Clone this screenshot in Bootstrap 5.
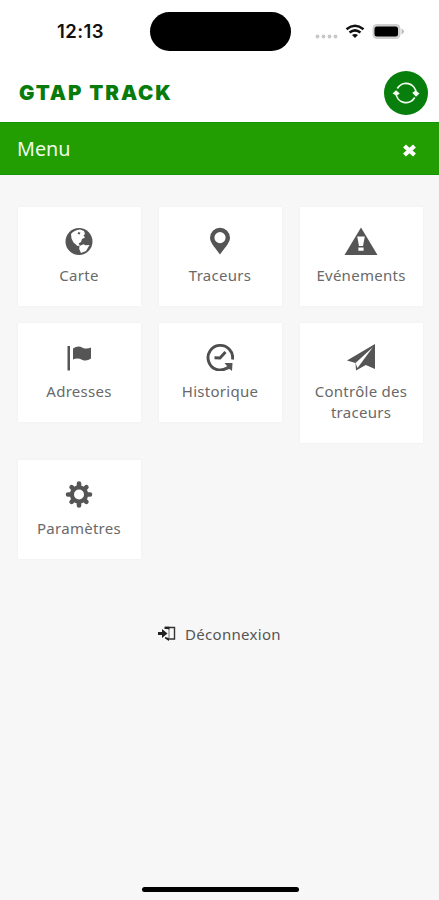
<!DOCTYPE html>
<html lang="fr">
<head>
<meta charset="utf-8">
<meta name="viewport" content="width=device-width, initial-scale=1">
<title>GTAP TRACK</title>
<link href="https://cdn.jsdelivr.net/npm/bootstrap@5.3.0/dist/css/bootstrap.min.css" rel="stylesheet">
<style>
body{background:#f7f7f7;font-family:"Noto Sans","Open Sans",sans-serif;height:900px;overflow:hidden}
svg{display:block;flex:none}
.status{height:63px;padding:0 0 0 57px}
.clock{font:600 18.5px/24px Inter,sans-serif;width:93px;letter-spacing:.45px;color:#111;margin-top:-1px}
.island{width:141px;height:39px;flex:none}
.signals{padding-left:24px}
.brand-row{height:59px;padding:0 11px 0 19px}
.brand{font:900 20.5px/24px Inter,sans-serif;color:#087b0b;letter-spacing:1.9px}
.refresh{width:44px;height:44px;background:#087e0c}
.menu-bar{height:53px;background:#229d02;border-top:1px solid #119507;border-bottom:1px solid #149607;padding:0 22px 0 17px;color:#f0faec;font-size:19.8px}
.menu-bar svg{margin-top:3px}
.tiles{display:grid;grid-template-columns:repeat(3,123px);column-gap:18px;row-gap:17px;padding:32px 0 0 18px;align-items:start}
.tile{min-height:99px;background:#fff;color:#696969;font-size:15px;line-height:21px;padding:20px 5px 20px 4px;box-shadow:0 0 2px #eee;letter-spacing:.27px}
.tile svg{margin-bottom:10px;fill:#555}
.logout{color:#555;font-size:15px;line-height:22px;margin-top:64px;letter-spacing:.3px}
.home{width:157px;height:5px;margin-bottom:8px;transform:translateX(1px)}
</style>
<script src="https://cdn.jsdelivr.net/npm/bootstrap@5.3.0/dist/js/bootstrap.bundle.min.js"></script>
</head>
<body class="d-flex flex-column">
<header class="bg-white">
 <div class="status d-flex align-items-center">
  <span class="clock flex-shrink-0">12:13</span><span class="island bg-black rounded-pill"></span>
  <div class="signals d-flex align-items-center">
   <svg width="90" height="24" viewBox="0 0 90 24"><g fill="#c8c8c8"><circle cx="2.500" cy="16.500" r="1.900"/><circle cx="8.500" cy="16.500" r="1.900"/><circle cx="14.500" cy="16.500" r="1.900"/><circle cx="20.500" cy="16.500" r="1.900"/></g><g fill="none" stroke="#111" stroke-width="2.500"><path d="M31.500 9.200Q40 2.400 48.500 9.200"/><path d="M34.500 12.600Q40 8.200 45.500 12.600"/></g><path d="M37 15q3-2.200 6 0l-3 3z" fill="#111"/><rect x="57.500" y="4" width="28" height="15" rx="4.500" fill="#cfcfcf"/><path d="M86.500 8.500q5 3 0 6z" fill="#bbb"/><rect x="59.500" y="6.500" width="23.500" height="10" rx="2.500"/></svg>
  </div>
 </div>
 <div class="brand-row d-flex align-items-center justify-content-between">
  <span class="brand">GTAP TRACK</span>
  <button class="refresh btn rounded-circle border-0 p-0 d-flex align-items-center justify-content-center" aria-label="Actualiser"><svg width="28" height="28" viewBox="0 0 28 28"><g fill="none" stroke="#f2fff2" stroke-width="1.700"><path d="M5.300 9.500A10 10 0 0 1 24 14"/><path d="M22.700 18.500A10 10 0 0 1 4 14"/></g><path fill="#f2fff2" d="M.5 14.500 4 11.200l3.800 3.300-3.300 2.300zM20.200 13.800l3.500-2.300 3.800 3-3.500 3.300z"/></svg></button>
 </div>
</header>
<div class="menu-bar d-flex align-items-center justify-content-between"><span>Menu</span><svg width="15" height="15" viewBox="0 0 15 15"><path d="M2.500 3l10 9M12.500 3l-10 9" stroke="#fff" stroke-width="4.200"/></svg></div>
<main class="flex-grow-1">
 <div class="tiles">
  <a class="tile d-flex flex-column align-items-center text-center text-decoration-none"><svg width="28" height="28" viewBox="0 0 28 28"><circle cx="14" cy="14.500" r="13.500"/><path fill="#fff" d="M6 7Q9 3 15 2.500l4 1.500 1 3-1.500 1.500 1.500 2-3 1.500-1 3-2.500 1.500 1.500 2-2.500.5-4-3.500-2-4zM14.500 19l4-1.700 2 1 4-.3-3.500 6-5 2-1.800-4z"/><path d="M13.500 5l2 .8-1 1.700-2-.8z"/></svg>Carte</a>
  <a class="tile d-flex flex-column align-items-center text-center text-decoration-none"><svg width="28" height="28" viewBox="0 0 28 28"><path fill-rule="evenodd" d="M14 27.500C11 22.500 4 16.500 4 10.700a10 10 0 0 1 20 0c0 5.800-7 11.800-10 16.800zM14 5a5.600 5.600 0 1 0 0 11.200A5.600 5.600 0 0 0 14 5z"/></svg>Traceurs</a>
  <a class="tile d-flex flex-column align-items-center text-center text-decoration-none"><svg width="34" height="28" viewBox="0 0 34 28"><path d="M17 .5 33.500 28H.5z"/><path d="M13.200 9.500h7.600l-1.800 9.500h-4zM14.400 20.500h5.200v3.300h-5.200z" fill="#fff"/></svg>Evénements</a>
  <a class="tile d-flex flex-column align-items-center text-center text-decoration-none"><svg width="28" height="28" viewBox="0 0 28 28"><path d="M2.500 3H5v24.500H2.500zM8 5.500q5-3.500 9.500-.8 4.500 1.800 8.500-.2v11q-4 3-8.500 1.500-5-2.500-9.500-.5z"/></svg>Adresses</a>
  <a class="tile d-flex flex-column align-items-center text-center text-decoration-none"><svg width="28" height="28" viewBox="0 0 28 28"><path d="M26.500 16.500A12.300 12.300 0 1 0 21 25M8.500 14.800l5.500.2L19.500 9" fill="none" stroke="#4e4e4e" stroke-width="2.900"/><path d="M18.500 20H26.500l-.5 8-2.500-2-6 1.500 3.500-4.500z"/></svg>Historique</a>
  <a class="tile d-flex flex-column align-items-center text-center text-decoration-none"><svg width="30" height="28" viewBox="0 0 30 28"><path d="M1 17.500 29 1v25l-9.200-4L10 27.500 9.500 20z"/><path d="M27 4 9.500 20l2 5z" fill="#fff"/></svg>Contrôle des<br>traceurs</a>
  <a class="tile d-flex flex-column align-items-center text-center text-decoration-none"><svg width="28" height="28" viewBox="0 0 28 28"><g stroke="#555" stroke-width="4.600" stroke-linecap="round"><path d="M14 3.500v22M3 14.500h22M6.600 7.100l14.800 14.800M21.400 7.100 6.600 21.900"/></g><circle cx="14" cy="14.500" r="9.200"/><circle cx="14" cy="14.500" r="5" fill="#fff"/></svg>Paramètres</a>
 </div>
 <div class="logout d-flex align-items-center justify-content-center"><svg class="me-2" width="19" height="16" viewBox="0 0 19 16"><path d="M0 6h4V3l5.500 4.500L4 12V9H0z" fill="#222"/><path d="M7 1.500h9.500V13H9.500" fill="none" stroke="#333" stroke-width="1.400"/><path d="M6.500.8h5V4L9.500 3H6.500zM7 11l4 1v3l-4-2.500z" fill="#222"/><path d="M11 3.500v9" stroke="#777"/></svg><span>Déconnexion</span></div>
</main>
<div class="home bg-black rounded-pill mx-auto"></div>
</body>
</html>
